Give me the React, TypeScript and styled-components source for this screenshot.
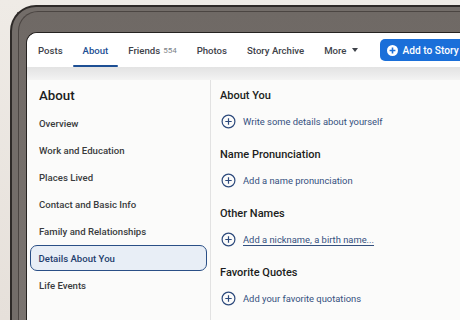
import React from "react";
import styled, { createGlobalStyle } from "styled-components";

const Global = createGlobalStyle`
  html, body { margin: 0; padding: 0; }
  body {
    width: 460px; height: 320px; overflow: hidden;
    background: #e7e2dc;
    font-family: Roboto, "Noto Sans", Arial, sans-serif;
  }
`;

const Page = styled.div`
  width: 460px; height: 320px; overflow: hidden;
  background: linear-gradient(180deg, #efebe6 0%, #e6e0da 100%);
  padding: 5px 0 0 10px;
  box-sizing: border-box;
  display: flex;
`;

const Bezel = styled.div`
  flex: 1;
  display: flex;
  min-height: 0;
  background: #736d69;
  border-top: 2px solid #2e2a28;
  border-left: 2px solid #2e2a28;
  border-top-left-radius: 26px;
  padding: 4px 0 0 6px;
`;

const BezelInner = styled.div`
  flex: 1;
  display: flex;
  min-height: 0;
  border-top: 1.5px solid #4b4542;
  border-left: 1.5px solid #4b4542;
  border-top-left-radius: 20px;
  padding: 20px 0 0 7px;
  background: linear-gradient(180deg, #6f6965 0%, #7a7470 100%);
`;

const Screen = styled.div`
  flex: 1;
  display: flex;
  flex-direction: column;
  min-height: 0;
  background: #fbfbfa;
  border-top: 1.5px solid #252220;
  border-left: 1.5px solid #252220;
  border-top-left-radius: 11px;
  overflow: hidden;
`;

const Nav = styled.div`
  flex-shrink: 0;
  height: 34px;
  display: flex;
  align-items: center;
  padding-left: 11px;
  background: #ffffff;
  white-space: nowrap;
`;

const Tab = styled.div<{ $active?: boolean }>`
  position: relative;
  height: 34px;
  display: flex;
  align-items: center;
  margin-right: 20px;
  font-size: 9.6px;
  font-weight: 500;
  color: ${(p) => (p.$active ? "#1d4f94" : "#3e4249")};
  ${(p) =>
    p.$active &&
    `&::after{content:"";position:absolute;left:-10px;right:-10px;bottom:0;height:2px;background:#1d4f94;border-radius:1px;}`}
`;

const Count = styled.span`
  font-size: 8px;
  font-weight: 400;
  color: #7d8288;
  margin-left: 3px;
`;

const Caret = styled.span`
  display: inline-block;
  margin-left: 6px;
  width: 0; height: 0;
  border-left: 3px solid transparent;
  border-right: 3px solid transparent;
  border-top: 4px solid #3e4249;
`;

const StoryButton = styled.div`
  margin-left: 2px;
  height: 22px;
  padding: 0 24px 0 7px;
  display: flex;
  align-items: center;
  gap: 4px;
  background: #1a6fd9;
  border-radius: 5px;
  color: #fff;
  font-size: 10.2px;
  font-weight: 500;
`;

const Band = styled.div`
  flex-shrink: 0;
  height: 13px;
  background: linear-gradient(180deg, #e3e3e3 0%, #ececec 60%, #f4f4f3 100%);
`;

const Body = styled.div`
  flex: 1;
  min-height: 0;
  overflow: hidden;
  display: grid;
  grid-template-columns: 184px 1fr;
`;

const Side = styled.div`
  border-right: 1px solid #e2e2e2;
  padding: 7px 3px 0 3px;
  display: flex;
  flex-direction: column;
`;

const SideTitle = styled.div`
  height: 18px;
  line-height: 18px;
  padding-left: 9px;
  font-size: 13.3px;
  font-weight: 500;
  color: #1c1e21;
  margin-bottom: 5px;
`;

const SideItem = styled.div<{ $selected?: boolean }>`
  height: 26px;
  margin-bottom: 1px;
  box-sizing: border-box;
  display: flex;
  align-items: center;
  padding-left: 9px;
  font-size: 9.6px;
  font-weight: 500;
  color: ${(p) => (p.$selected ? "#1f3e6e" : "#3a3b3d")};
  border-radius: 7px;
  ${(p) =>
    p.$selected &&
    `background:#e8eef6;border:1.5px solid #2a4f86;padding-left:7.5px;`}
`;

const Main = styled.div`
  padding: 7px 0 0 9px;
  display: flex;
  flex-direction: column;
`;

const Section = styled.div`
  display: flex;
  flex-direction: column;
  flex-shrink: 0;
  margin-bottom: 15px;
`;

const SectionTitle = styled.div`
  height: 18px;
  line-height: 18px;
  font-size: 11px;
  font-weight: 500;
  color: #1c1e21;
  margin-bottom: 6px;
`;

const AddRow = styled.div`
  height: 20px;
  display: flex;
  align-items: center;
  gap: 7px;
  padding-left: 1px;
`;

const AddText = styled.span<{ $underline?: boolean }>`
  font-size: 9.4px;
  font-weight: 400;
  color: #34507e;
  text-decoration: ${(p) => (p.$underline ? "underline" : "none")};
  text-underline-offset: 2px;
`;

const PlusCircle = () => (
  <svg width="15" height="15" viewBox="0 0 15 15">
    <circle cx="7.5" cy="7.5" r="6.4" fill="none" stroke="#2d4a7c" strokeWidth="1.2" />
    <path d="M7.5 4.3v6.4M4.3 7.5h6.4" stroke="#2d4a7c" strokeWidth="1.2" />
  </svg>
);

const WhitePlus = () => (
  <svg width="11" height="11" viewBox="0 0 11 11">
    <circle cx="5.5" cy="5.5" r="5.5" fill="#fff" />
    <path d="M5.5 2.6v5.8M2.6 5.5h5.8" stroke="#1a6fd9" strokeWidth="1.6" />
  </svg>
);

const sideItems = [
  "Overview",
  "Work and Education",
  "Places Lived",
  "Contact and Basic Info",
  "Family and Relationships",
  "Details About You",
  "Life Events",
];

const sections = [
  { title: "About You", link: "Write some details about yourself" },
  { title: "Name Pronunciation", link: "Add a name pronunciation" },
  { title: "Other Names", link: "Add a nickname, a birth name...", underline: true },
  { title: "Favorite Quotes", link: "Add your favorite quotations" },
];

export default function App() {
  return (
    <>
      <Global />
      <Page>
        <Bezel>
          <BezelInner>
            <Screen>
              <Nav>
                <Tab>Posts</Tab>
                <Tab $active>About</Tab>
                <Tab>
                  Friends<Count>554</Count>
                </Tab>
                <Tab>Photos</Tab>
                <Tab>Story Archive</Tab>
                <Tab>
                  More<Caret />
                </Tab>
                <StoryButton>
                  <WhitePlus />
                  Add to Story
                </StoryButton>
              </Nav>
              <Band />
              <Body>
                <Side>
                  <SideTitle>About</SideTitle>
                  {sideItems.map((s) => (
                    <SideItem key={s} $selected={s === "Details About You"}>
                      {s}
                    </SideItem>
                  ))}
                </Side>
                <Main>
                  {sections.map((s) => (
                    <Section key={s.title}>
                      <SectionTitle>{s.title}</SectionTitle>
                      <AddRow>
                        <PlusCircle />
                        <AddText $underline={s.underline}>{s.link}</AddText>
                      </AddRow>
                    </Section>
                  ))}
                </Main>
              </Body>
            </Screen>
          </BezelInner>
        </Bezel>
      </Page>
    </>
  );
}
